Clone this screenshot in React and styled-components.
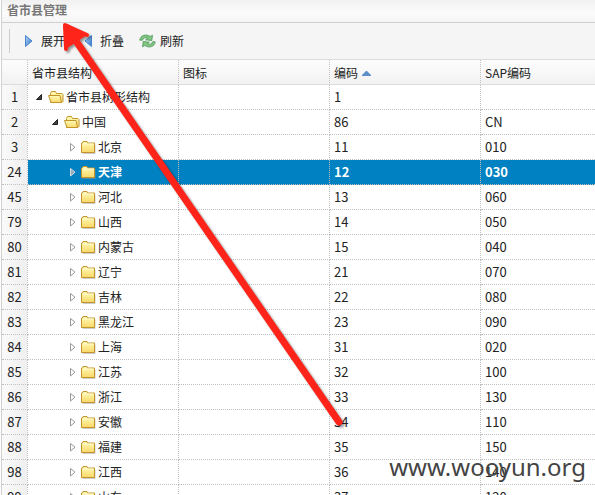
import React from "react";
import styled, { createGlobalStyle, css } from "styled-components";

const GlobalStyle = createGlobalStyle`
  * { box-sizing: border-box; }
  body {
    margin: 0;
    background: #fff;
    color: #222;
    font-family: "Noto Sans CJK SC", "Noto Sans", sans-serif;
    font-size: 12px;
  }
`;

const Page = styled.main`
  position: relative;
  height: 100vh;
  overflow: hidden;
  padding-left: 1px;
`;

const Panel = styled.section`
  border-left: 1px solid #d0d0d0;
`;

const Title = styled.h1`
  height: 23px;
  margin: 0;
  padding: 0 5px;
  border-bottom: 1px solid #d0d0d0;
  background: linear-gradient(#f1f1f1, #fbfbfb 60%, #f5f5f5);
  color: #777;
  font-size: 12px;
  font-weight: 700;
  line-height: 20px;
`;

const Toolbar = styled.div`
  display: flex;
  align-items: center;
  height: 36px;
  padding: 0 7px;
  background: #f5f5f5;
`;

const Separator = styled.span`
  width: 1px;
  height: 24px;
  margin-right: 11px;
  background: #ccc;
`;

const ToolButton = styled.button`
  display: flex;
  align-items: center;
  gap: 4px;
  width: 59px;
  padding: 0;
  border: 0;
  background: none;
  color: inherit;
  font: inherit;
  line-height: 20px;
`;

const Grid = styled.table`
  width: 100%;
  table-layout: fixed;
  border-collapse: separate;
  border-spacing: 0;
  border-top: 1px solid #ddd;
`;

const Col = styled.col`
  width: ${(p) => (p.$size === "number" ? "26px" : p.$size === "data" ? "151px" : "auto")};
`;

const cell = css`
  height: 25px;
  border-right: 1px dotted #c0c0c0;
  border-bottom: 1px dotted #c0c0c0;
  text-align: left;
  line-height: 24px;
  white-space: nowrap;

  &:last-child {
    border-right: 0;
  }
`;

const HeadCell = styled.th`
  ${cell}
  padding: 1px 4px 0;
  line-height: 23px;
  border-bottom: 1px solid #ddd;
  background: linear-gradient(#fdfdfd, #f2f2f2);
  font-weight: 400;
`;

const NumberCell = styled.th`
  ${cell}
  padding: 0;
  background: linear-gradient(90deg, #fafafa, #efefef);
  font-size: 13px;
  font-weight: 400;
  text-align: center;
`;

const Cell = styled.td`
  ${cell}
  padding: 0 4px;
  font-size: 13px;
`;

const Row = styled.tr`
  ${(p) =>
    p.$selected &&
    css`
      ${Cell} {
        background: #0081c2;
        color: #fff;
        font-weight: 700;
      }
    `}
`;

const TreeNode = styled.div`
  display: flex;
  align-items: center;
  height: 24px;
  padding-left: ${(p) => p.$level * 16}px;
  font-size: 12px;
  line-height: 24px;
`;

const Toggle = styled.button`
  display: flex;
  width: 16px;
  height: 16px;
  padding: 0;
  border: 0;
  background: none;
`;

const FolderBox = styled.span`
  display: flex;
  width: 18px;
`;

const SortMark = styled.svg`
  margin-left: 4px;
  vertical-align: 2px;
`;

const Arrow = styled.svg`
  position: absolute;
  top: 0;
  left: 0;
  pointer-events: none;
  filter: drop-shadow(2px 2px 1px rgba(0, 0, 0, 0.4));
`;

const Watermark = styled.div`
  position: absolute;
  right: 9px;
  bottom: 12px;
  color: #444;
  font-family: "Noto Sans", sans-serif;
  font-size: 24px;
  line-height: 32px;
  pointer-events: none;
`;

function PlayIcon({ back }) {
  return (
    <svg width="16" height="16" viewBox="0 0 16 16" aria-hidden="true">
      <defs>
        <linearGradient id="blue" x1="0" y1="0" x2="1" y2="1">
          <stop offset="0" stopColor="#b5d4f4" />
          <stop offset="1" stopColor="#2f74cc" />
        </linearGradient>
      </defs>
      <path
        d={back ? "M11.5 2.5v11L5 8z" : "M4.5 2.5v11L11 8z"}
        fill="url(#blue)"
        stroke="#4a84cf"
        strokeLinejoin="round"
      />
    </svg>
  );
}

function RefreshIcon() {
  return (
    <svg width="17" height="16" viewBox="0 0 17 16" aria-hidden="true">
      <g fill="#82c482" stroke="#4c9a58" strokeWidth="0.8" strokeLinejoin="round">
        <path d="M0.8 7.2C1.2 2.6 6.5 0.4 11.2 3.4L13.5 2.2L12.8 7.6L6.6 6.8L8.7 5.3C6.5 4.2 4 4.8 3.5 7.2z" />
        <path d="M16.2 8.8C15.8 13.4 10.5 15.6 5.8 12.6L3.5 13.8L4.2 8.4L10.4 9.2L8.3 10.7C10.5 11.8 13 11.2 13.5 8.8z" />
      </g>
    </svg>
  );
}

function ToggleIcon({ open, selected }) {
  return (
    <svg width="16" height="16" viewBox="0 0 16 16" aria-hidden="true">
      {open ? (
        <path d="M9.5 5.5v5H4.5z" fill="#444" stroke="#222" strokeLinejoin="round" />
      ) : (
        <path
          d="M6.5 4.5v7.5L11 8.2z"
          fill={selected ? "#8fa9ba" : "#fff"}
          stroke={selected ? "#d9dde0" : "#999"}
        />
      )}
    </svg>
  );
}

function FolderIcon({ open }) {
  return (
    <svg width="16" height="16" viewBox="0 0 16 16" aria-hidden="true">
      <defs>
        <linearGradient id="gold" x1="0" y1="0" x2="0" y2="1">
          <stop offset="0" stopColor="#fffcb8" />
          <stop offset="1" stopColor="#f9d768" />
        </linearGradient>
      </defs>
      {open ? (
        <g fill="url(#gold)" stroke="#c2942a" strokeLinejoin="round">
          <path d="M2.5 13.5v-9l1-2h4l1 2h5.5l1 1v7l-1 1z" />
          <path d="M0.5 6.5h11.5l1.5 7H3z" />
        </g>
      ) : (
        <g strokeLinejoin="round">
          <path d="M2.5 14.5h12.5v-9" fill="none" stroke="#999" strokeOpacity="0.5" />
          <path d="M1.5 13.5v-9.5h1l.5-1.5h4l.5 1.5h7v9.5z" fill="url(#gold)" stroke="#c2942a" />
          <path d="M2.5 5h11" stroke="#fffbd0" />
        </g>
      )}
    </svg>
  );
}

const rows = [
  [1, 0, "省市县树形结构", "1", ""],
  [2, 1, "中国", "86", "CN"],
  [3, 2, "北京", "11", "010"],
  [24, 2, "天津", "12", "030"],
  [45, 2, "河北", "13", "060"],
  [79, 2, "山西", "14", "050"],
  [80, 2, "内蒙古", "15", "040"],
  [81, 2, "辽宁", "21", "070"],
  [82, 2, "吉林", "22", "080"],
  [83, 2, "黑龙江", "23", "090"],
  [84, 2, "上海", "31", "020"],
  [85, 2, "江苏", "32", "100"],
  [86, 2, "浙江", "33", "130"],
  [87, 2, "安徽", "34", "110"],
  [88, 2, "福建", "35", "150"],
  [98, 2, "江西", "36", "140"],
  [99, 2, "山东", "37", "120"],
];

const selectedNumber = 24;

export default function App() {
  return (
    <Page>
      <GlobalStyle />
      <Panel>
        <Title>省市县管理</Title>
        <Toolbar>
          <Separator />
          <ToolButton type="button"><PlayIcon />展开</ToolButton>
          <ToolButton type="button"><PlayIcon back />折叠</ToolButton>
          <ToolButton type="button"><RefreshIcon />刷新</ToolButton>
        </Toolbar>
        <Grid>
          <colgroup>
            <Col $size="number" />
            <Col $size="data" />
            <Col $size="data" />
            <Col $size="data" />
            <Col />
          </colgroup>
          <thead>
            <tr>
              <HeadCell aria-label="#" />
              <HeadCell scope="col">省市县结构</HeadCell>
              <HeadCell scope="col">图标</HeadCell>
              <HeadCell scope="col" aria-sort="ascending">
                编码
                <SortMark width="9" height="5" viewBox="0 0 9 5" aria-hidden="true">
                  <path d="M4 0h1l4 4v1H0V4z" fill="#5d8fcb" />
                </SortMark>
              </HeadCell>
              <HeadCell scope="col">SAP编码</HeadCell>
            </tr>
          </thead>
          <tbody>
            {rows.map(([number, level, name, code, sap]) => {
              const selected = number === selectedNumber;
              const open = level < 2;
              return (
                <Row key={number} $selected={selected} aria-selected={selected}>
                  <NumberCell scope="row">{number}</NumberCell>
                  <Cell>
                    <TreeNode $level={level}>
                      <Toggle type="button" aria-label={name} aria-expanded={open}>
                        <ToggleIcon open={open} selected={selected} />
                      </Toggle>
                      <FolderBox><FolderIcon open={open} /></FolderBox>
                      {name}
                    </TreeNode>
                  </Cell>
                  <Cell />
                  <Cell>{code}</Cell>
                  <Cell>{sap}</Cell>
                </Row>
              );
            })}
          </tbody>
        </Grid>
      </Panel>
      <Arrow width="360" height="440" viewBox="0 0 360 440" aria-hidden="true">
        <g fill="none" stroke="#ff2419" strokeLinecap="round" strokeLinejoin="round">
          <path d="M67 28L339 422" strokeWidth="7" />
          <path d="M66 49L65 25L87 35" strokeWidth="4" />
        </g>
        <path d="M65 25L87 35L66 49z" fill="#ff2419" />
      </Arrow>
      <Watermark>www.wooyun.org</Watermark>
    </Page>
  );
}
